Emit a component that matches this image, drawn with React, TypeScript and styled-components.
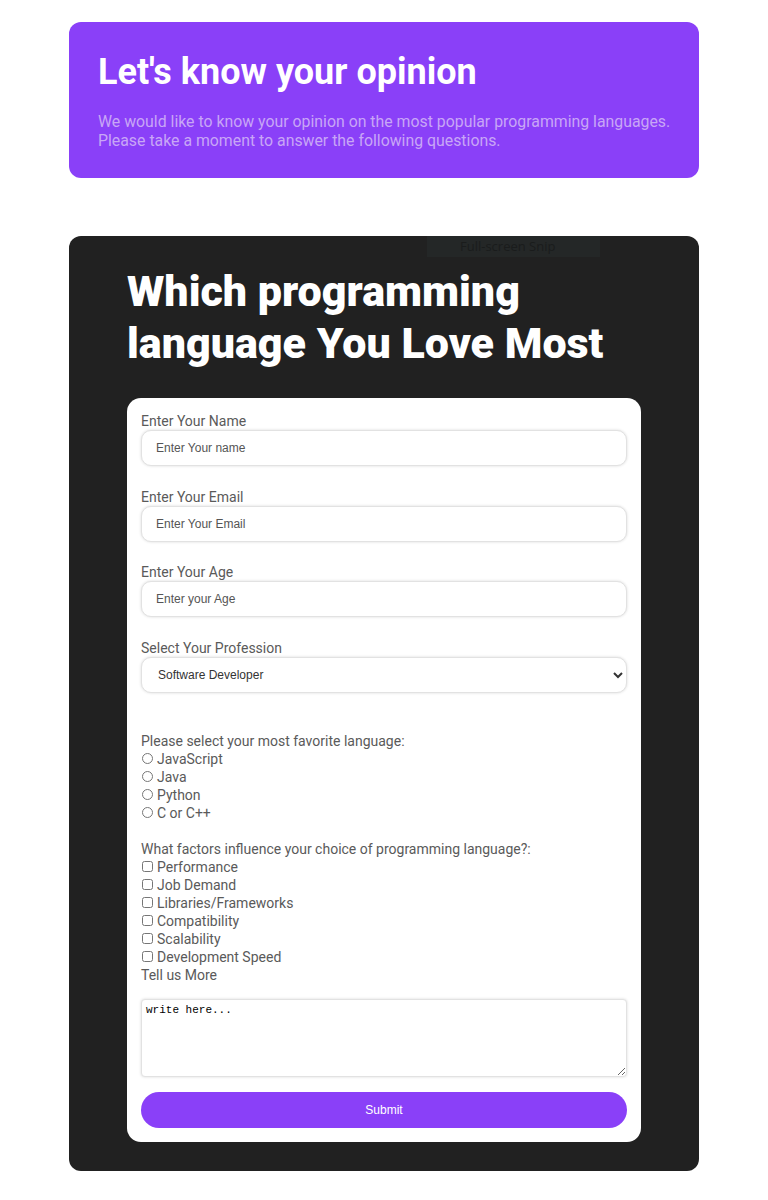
import React from "react";
import styled, { createGlobalStyle } from "styled-components";

const Global = createGlobalStyle`
  html, body { background: #ffffff; }
  body {
    margin: 8px;
    font-family: Roboto, "Liberation Sans", Arial, sans-serif;
  }
  * { box-sizing: border-box; }
`;

const Page = styled.main`
  width: 630px;
  margin: 14px auto 0;
  display: flex;
  flex-direction: column;
  gap: 58px;
`;

const Hero = styled.header`
  background: #8a40f8;
  border-radius: 12px;
  padding: 29px 16px 28px 29px;
`;

const HeroTitle = styled.h1`
  margin: 0;
  font-size: 36px;
  line-height: 42px;
  font-weight: 700;
  color: #ffffff;
`;

const HeroText = styled.p`
  margin: 19px 0 0;
  font-size: 15.85px;
  line-height: 19px;
  color: #c8a6f6;
  white-space: nowrap;
`;

const Survey = styled.section`
  position: relative;
  background: #212121;
  border-radius: 12px;
  padding: 29px 58px 29px;
`;

const Snip = styled.div`
  position: absolute;
  left: 358px;
  top: 0;
  width: 173px;
  height: 21px;
  background: #242727;
  color: #1a1c1c;
  font-family: "Open Sans", sans-serif;
  font-size: 13px;
  line-height: 21px;
  padding-left: 33px;
`;

const SurveyTitle = styled.h2`
  margin: 0 0 29px;
  font-size: 43px;
  line-height: 52px;
  font-weight: 900;
  color: #ffffff;
  width: 510px;
`;

const FormCard = styled.form`
  background: #ffffff;
  border-radius: 14px;
  padding: 15px 14px 14px;
  display: flex;
  flex-direction: column;
`;

const Field = styled.div<{ $last?: boolean }>`
  display: flex;
  flex-direction: column;
  margin-bottom: ${(p) => (p.$last ? 0 : 22.67)}px;
`;

const Label = styled.label`
  font-size: 14px;
  line-height: 17px;
  color: #5a5a5a;
`;

const TextInput = styled.input`
  height: 36px;
  width: 100%;
  border: 1px solid #e2e2e2;
  border-radius: 10px;
  box-shadow: 0 0 3px rgba(0, 0, 0, 0.15);
  padding: 0 14px;
  font-family: "Liberation Sans", Arial, sans-serif;
  font-size: 12px;
  color: #555;
  outline: none;
  &::placeholder { color: #555; }
`;

const Select = styled.select`
  height: 36px;
  width: 100%;
  border: 1px solid #e2e2e2;
  border-radius: 10px;
  box-shadow: 0 0 3px rgba(0, 0, 0, 0.15);
  padding: 0 12px;
  font-family: "Liberation Sans", Arial, sans-serif;
  font-size: 12px;
  color: #333;
  background: #fff;
  outline: none;
`;

const Group = styled.fieldset<{ $top: number }>`
  border: 0;
  margin: ${(p) => p.$top}px 0 0;
  padding: 0;
  display: flex;
  flex-direction: column;
`;

const Question = styled.div`
  font-size: 14px;
  line-height: 18px;
  color: #5a5a5a;
`;

const Option = styled.label`
  display: flex;
  align-items: center;
  font-size: 14px;
  line-height: 18px;
  color: #5a5a5a;
`;

const Choice = styled.input`
  width: 11px;
  height: 11px;
  margin: 0 4px 0 1px;
  accent-color: #8a40f8;
`;

const TextArea = styled.textarea`
  margin-top: 15px;
  height: 78px;
  width: 100%;
  border: 1px solid #e2e2e2;
  border-radius: 4px;
  box-shadow: 0 0 3px rgba(0, 0, 0, 0.15);
  padding: 4px 4px;
  font-family: "Liberation Mono", "DejaVu Sans Mono", monospace;
  font-size: 11px;
  color: #000;
  outline: none;
`;

const Submit = styled.button`
  margin-top: 15px;
  height: 36px;
  width: 100%;
  border: 0;
  border-radius: 18px;
  background: #8a40f8;
  color: #ffffff;
  font-family: "Liberation Sans", Arial, sans-serif;
  font-size: 12px;
  cursor: pointer;
`;

const languages = ["JavaScript", "Java", "Python", "C or C++"];
const factors = [
  "Performance",
  "Job Demand",
  "Libraries/Frameworks",
  "Compatibility",
  "Scalability",
  "Development Speed",
];

export default function App() {
  return (
    <>
      <Global />
      <Page>
        <Hero>
          <HeroTitle>Let's know your opinion</HeroTitle>
          <HeroText>
            We would like to know your opinion on the most popular programming languages.
            <br />
            Please take a moment to answer the following questions.
          </HeroText>
        </Hero>
        <Survey>
          <Snip>Full-screen Snip</Snip>
          <SurveyTitle>Which programming language You Love Most</SurveyTitle>
          <FormCard onSubmit={(e) => e.preventDefault()}>
            <Field>
              <Label htmlFor="name">Enter Your Name</Label>
              <TextInput id="name" placeholder="Enter Your name" />
            </Field>
            <Field>
              <Label htmlFor="email">Enter Your Email</Label>
              <TextInput id="email" placeholder="Enter Your Email" />
            </Field>
            <Field>
              <Label htmlFor="age">Enter Your Age</Label>
              <TextInput id="age" placeholder="Enter your Age" />
            </Field>
            <Field $last>
              <Label htmlFor="prof">Select Your Profession</Label>
              <Select id="prof" defaultValue="dev">
                <option value="dev">Software Developer</option>
                <option value="student">Student</option>
                <option value="other">Other</option>
              </Select>
            </Field>
            <Group $top={39}>
              <Question>Please select your most favorite language:</Question>
              {languages.map((l) => (
                <Option key={l}>
                  <Choice type="radio" name="lang" />
                  {l}
                </Option>
              ))}
            </Group>
            <Group $top={18}>
              <Question>What factors influence your choice of programming language?:</Question>
              {factors.map((f) => (
                <Option key={f}>
                  <Choice type="checkbox" />
                  {f}
                </Option>
              ))}
              <Question>Tell us More</Question>
            </Group>
            <TextArea defaultValue="write here..." />
            <Submit type="submit">Submit</Submit>
          </FormCard>
        </Survey>
      </Page>
    </>
  );
}
